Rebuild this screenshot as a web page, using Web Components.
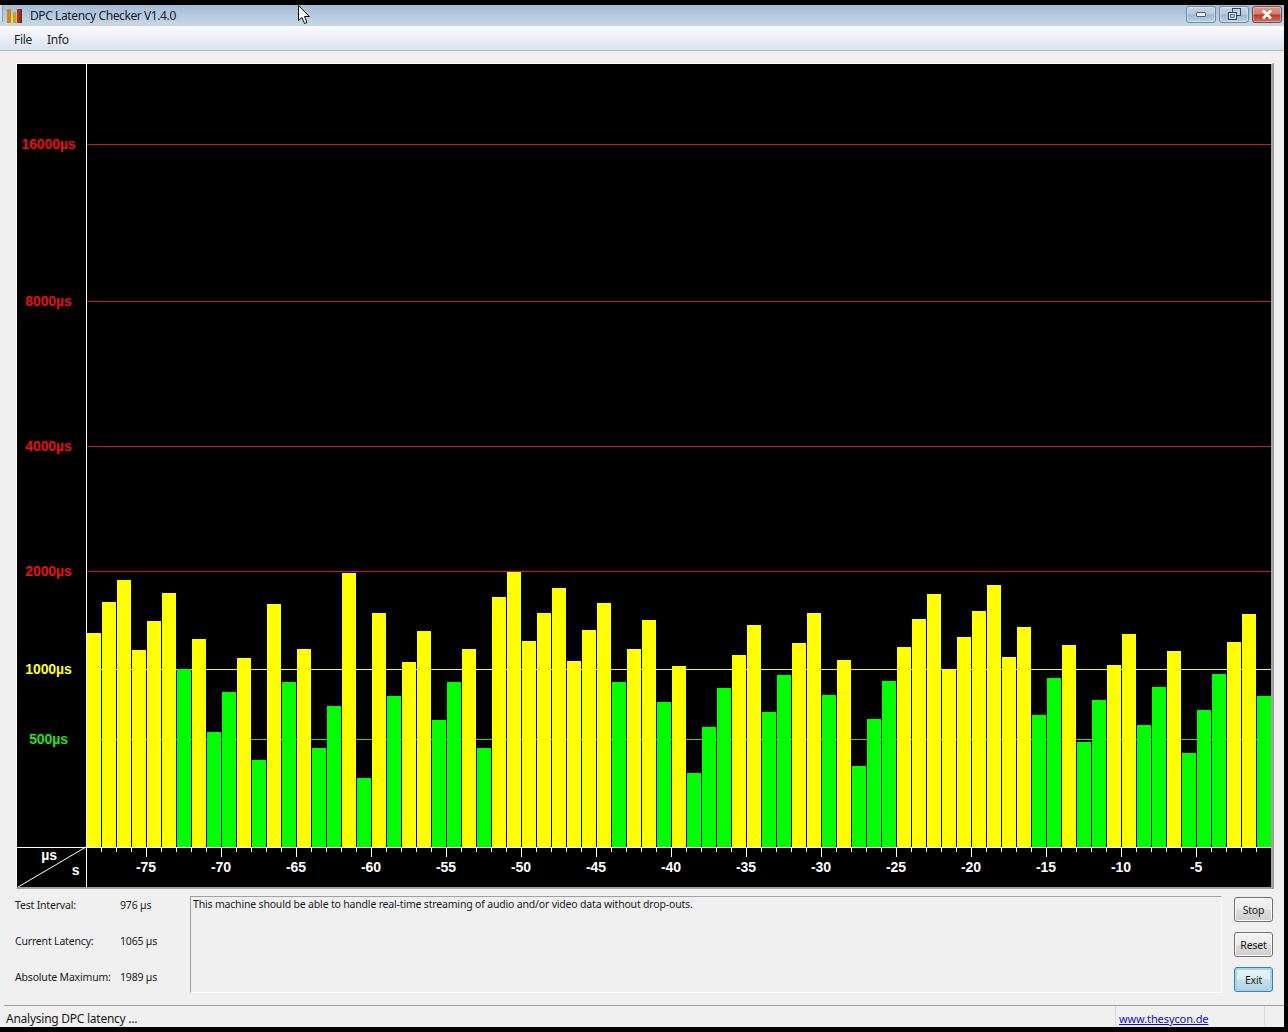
<!DOCTYPE html>
<html>
<head>
<meta charset="utf-8">
<title>DPC Latency Checker</title>
<style>
  html, body { margin: 0; background: #000; height: 100%; overflow: hidden; }
  body { font: 11px "Noto Sans", "Liberation Sans", sans-serif; color: #1a1a1a; }
</style>
</head>
<body>
<app-window>
  <title-bar>DPC Latency Checker V1.4.0</title-bar>
  <menu-bar></menu-bar>
  <latency-chart></latency-chart>
  <info-panel>This machine should be able to handle real-time streaming of audio and/or video data without drop-outs.</info-panel>
  <status-bar>Analysing DPC latency ...</status-bar>
</app-window>
<mouse-cursor></mouse-cursor>

<script>
class AppWindow extends HTMLElement {
  connectedCallback() {
    this.attachShadow({ mode: 'open' });
    this.shadowRoot.innerHTML = `
      <style>
        :host {
          display: flex;
          flex-direction: column;
          width: 1284px;
          height: 1022px;
          margin-top: 5px;
          background: #f0f0f0;
        }
      </style>
      <slot></slot>
    `;
  }
}
customElements.define('app-window', AppWindow);

class TitleBar extends HTMLElement {
  connectedCallback() {
    this.attachShadow({ mode: 'open' });
    this.shadowRoot.innerHTML = `
      <style>
        :host {
          display: flex;
          align-items: center;
          height: 21px;
          background: linear-gradient(#a3bcd6, #c9d8e7);
          color: #14202c;
          font: 12px "Noto Sans", "Liberation Sans", sans-serif;
        }
        svg { display: block; }
        .edge {
          align-self: stretch;
          width: 2px;
          margin-bottom: 4px;
          background: #d3dde8;
          border-right: 1px solid #8a9cb0;
        }
        .icon { margin-left: 4px; margin-right: 8px; }
        .title { flex: 1; letter-spacing: -0.4px; }
        .btns { display: flex; gap: 3px; margin-right: 2px; margin-bottom: 3px; }
        .btn {
          width: 30px;
          height: 17px;
          box-sizing: border-box;
          border: 1px solid #6f8aa6;
          border-radius: 3px;
          display: flex;
          align-items: center;
          justify-content: center;
          background: linear-gradient(#c5d6e6 0%, #b4c9de 48%, #9db7d1 52%, #bdd0e3 100%);
          box-shadow: inset 0 0 0 1px rgba(255,255,255,.35);
        }
        .close {
          border-color: #7a4a4a;
          background: linear-gradient(#dc9c90 0%, #d27a6c 48%, #b83a24 52%, #d0705c 100%);
        }
      </style>
      <span class="edge"></span>
      <svg class="icon" width="15" height="15" viewBox="0 0 15 15">
        <rect x="0" y="1" width="4" height="14" fill="#d9801c"/>
        <rect x="4" y="8" width="2" height="7" fill="#ecd070"/>
        <rect x="6" y="4" width="3" height="11" fill="#a8b030"/>
        <rect x="9" y="8" width="1" height="7" fill="#e8c050"/>
        <rect x="10" y="1" width="3" height="14" fill="#c02818"/>
        <rect x="13" y="1" width="2" height="14" fill="#6a3020"/>
      </svg>
      <span class="title"><slot></slot></span>
      <div class="btns">
        <div class="btn">
          <svg width="14" height="7" viewBox="0 0 14 7"><rect x="2.5" y="1.5" width="9" height="4" rx="0.5" fill="#eef3f8" stroke="#4d6278"/></svg>
        </div>
        <div class="btn">
          <svg width="13" height="12" viewBox="0 0 13 12">
            <rect x="4.5" y="0.5" width="8" height="7" fill="#c2d3e3" stroke="#33475c"/>
            <rect x="0.5" y="4.5" width="8" height="7" fill="#dbe6f0" stroke="#33475c"/>
            <rect x="2.5" y="6.5" width="4" height="3" fill="#a9bed2" stroke="#33475c" stroke-width="0.6"/>
          </svg>
        </div>
        <div class="btn close">
          <svg width="14" height="11" viewBox="0 0 14 11"><path d="M3 1.5 L11 9.5 M11 1.5 L3 9.5" fill="none" stroke="#fff" stroke-width="2.6"/></svg>
        </div>
      </div>
    `;
  }
}
customElements.define('title-bar', TitleBar);

class MenuBar extends HTMLElement {
  connectedCallback() {
    this.attachShadow({ mode: 'open' });
    this.shadowRoot.innerHTML = `
      <style>
        :host {
          display: flex;
          align-items: center;
          gap: 15px;
          padding-left: 14px;
          padding-top: 2px;
          box-sizing: border-box;
          height: 25px;
          background: linear-gradient(#fbfcfe, #dbe2ef);
          border-bottom: 1px solid #b4bcc8;
          color: #1a2230;
          font: 12px "Noto Sans", "Liberation Sans", sans-serif;
          letter-spacing: -0.3px;
        }
      </style>
      <span>File</span>
      <span>Info</span>
    `;
  }
}
customElements.define('menu-bar', MenuBar);

// bar tops read off the screenshot, left to right. g = below the 1000us line
const BARS = [
  [633,'y'],[602,'y'],[580,'y'],[650,'y'],[621,'y'],[593,'y'],[669,'g'],[639,'y'],[732,'g'],[692,'g'],
  [658,'y'],[760,'g'],[604,'y'],[682,'g'],[649,'y'],[748,'g'],[706,'g'],[573,'y'],[778,'g'],[613,'y'],
  [696,'g'],[662,'y'],[631,'y'],[720,'g'],[682,'g'],[649,'y'],[748,'g'],[597,'y'],[572,'y'],[641,'y'],
  [613,'y'],[588,'y'],[661,'y'],[630,'y'],[603,'y'],[682,'g'],[649,'y'],[620,'y'],[702,'g'],[666,'y'],
  [773,'g'],[727,'g'],[688,'g'],[655,'y'],[625,'y'],[712,'g'],[675,'g'],[643,'y'],[613,'y'],[695,'g'],
  [660,'y'],[766,'g'],[719,'g'],[681,'g'],[647,'y'],[619,'y'],[594,'y'],[669,'y'],[637,'y'],[611,'y'],
  [585,'y'],[657,'y'],[627,'y'],[715,'g'],[678,'g'],[645,'y'],[742,'g'],[700,'g'],[665,'y'],[634,'y'],
  [725,'g'],[687,'g'],[651,'y'],[753,'g'],[710,'g'],[674,'g'],[642,'y'],[614,'y'],[696,'g']
];

const GRID = [
  { y: 144, label: '16000µs', line: '#d01818', text: '#e81010' },
  { y: 301, label: '8000µs', line: '#d01818', text: '#e81010' },
  { y: 446, label: '4000µs', line: '#d01818', text: '#e81010' },
  { y: 571, label: '2000µs', line: '#d01818', text: '#e81010' },
  { y: 669, label: '1000µs', line: '#f0f060', text: '#ffff20' },
  { y: 739, label: '500µs', line: '#40d040', text: '#20e020' }
];

class LatencyChart extends HTMLElement {
  connectedCallback() {
    this.attachShadow({ mode: 'open' });
    let s = '';
    s += '<line x1="86.5" y1="64" x2="86.5" y2="888" stroke="#fff"/>';
    for (const g of GRID) {
      s += `<line x1="87" y1="${g.y + .5}" x2="1271" y2="${g.y + .5}" stroke="${g.line}"/>`;
      s += `<text x="48.5" y="${g.y + 5}" text-anchor="middle" fill="${g.text}">${g.label}</text>`;
    }
    BARS.forEach((b, i) => {
      const x = 87 + i * 15;
      s += `<rect x="${x}" y="${b[0]}" width="14" height="${847 - b[0]}" fill="${b[1] === 'y' ? '#ffff00' : '#00ff00'}"/>`;
    });
    s += '<line x1="17" y1="847.5" x2="1271" y2="847.5" stroke="#fff"/>';
    // ticks under the bars, every 5th one long with its label
    for (let k = 1; k * 15 + 86 < 1271; k++) {
      const x = 86 + k * 15;
      const long = k % 5 === 4;
      s += `<line x1="${x + .5}" y1="848" x2="${x + .5}" y2="${long ? 857 : 852}" stroke="#fff"/>`;
      if (long) {
        const sec = -75 + (k - 4) / 5 * 5;
        s += `<text x="${x}" y="872" text-anchor="middle" fill="#fff">${sec}</text>`;
      }
    }
    s += '<line x1="18" y1="887" x2="86" y2="847" stroke="#fff" shape-rendering="auto"/>';
    s += '<text x="49" y="860" text-anchor="middle" fill="#fff">µs</text>';
    s += '<text x="75.5" y="875" text-anchor="middle" fill="#fff">s</text>';
    this.shadowRoot.innerHTML = `
      <style>
        :host {
          display: block;
          margin: 12px 10px 0 16px;
          border-top: 1px solid #fff;
          border-left: 1px solid #fff;
          border-right: 3px solid #a0a0a0;
          border-bottom: 2px solid #a0a0a0;
          height: 823px;
        }
        svg { display: block; background: #000; shape-rendering: crispEdges; }
        text { font: bold 14px "Liberation Sans", Arial, sans-serif; letter-spacing: -0.1px; }
      </style>
      <svg width="1254" height="823" viewBox="17 64 1254 823">${s}</svg>
    `;
  }
}
customElements.define('latency-chart', LatencyChart);

class PushButton extends HTMLElement {
  connectedCallback() {
    this.attachShadow({ mode: 'open' });
    this.shadowRoot.innerHTML = `
      <style>
        :host {
          display: flex;
          align-items: center;
          justify-content: center;
          width: 39px;
          height: 25px;
          box-sizing: border-box;
          border: 1px solid #707070;
          border-radius: 3px;
          background: linear-gradient(#f4f4f4 0%, #ebebeb 48%, #dcdcdc 52%, #cfcfcf 100%);
          box-shadow: inset 0 0 0 1px #fbfbfb;
          color: #1a1a1a;
          font: 10.5px "Noto Sans", "Liberation Sans", sans-serif;
        }
        :host([active]) {
          border-color: #3c7fb1;
          background: linear-gradient(#eaf6fb 0%, #dcebf3 48%, #c8dde8 52%, #b8d0dd 100%);
          box-shadow: inset 0 0 0 2px #9ed8ee;
        }
      </style>
      <slot></slot>
    `;
  }
}
customElements.define('push-button', PushButton);

class InfoPanel extends HTMLElement {
  connectedCallback() {
    this.attachShadow({ mode: 'open' });
    this.shadowRoot.innerHTML = `
      <style>
        :host {
          display: flex;
          height: 116px;
          box-sizing: border-box;
          padding: 7px 11px 12px 15px;
          color: #1a1a1a;
          font: 10.5px "Noto Sans", "Liberation Sans", sans-serif;
          letter-spacing: -0.18px;
        }
        .stats {
          width: 175px;
          display: grid;
          grid-template-columns: 105px 1fr;
          grid-auto-rows: 36px;
          align-items: center;
          margin-top: -9px;
        }
        .msg {
          width: 1032px;
          box-sizing: border-box;
          border: 1px solid #fff;
          border-top-color: #a0a0a0;
          border-left-color: #a0a0a0;
          padding: 0 2px;
          line-height: 14px;
        }
        .btns {
          margin-left: 12px;
          padding-top: 1px;
          display: flex;
          flex-direction: column;
          gap: 10px;
        }
      </style>
      <div class="stats">
        <span>Test Interval:</span><span>976 µs</span>
        <span>Current Latency:</span><span>1065 µs</span>
        <span>Absolute Maximum:</span><span>1989 µs</span>
      </div>
      <div class="msg"><slot></slot></div>
      <div class="btns">
        <push-button>Stop</push-button>
        <push-button>Reset</push-button>
        <push-button active>Exit</push-button>
      </div>
    `;
  }
}
customElements.define('info-panel', InfoPanel);

class StatusBar extends HTMLElement {
  connectedCallback() {
    this.attachShadow({ mode: 'open' });
    this.shadowRoot.innerHTML = `
      <style>
        :host {
          display: flex;
          align-items: center;
          height: 22px;
          box-sizing: border-box;
          margin-left: 4px;
          border-top: 1px solid #a0a0a0;
          color: #1a1a1a;
          font: 12px "Noto Sans", "Liberation Sans", sans-serif;
          letter-spacing: -0.25px;
        }
        .msg { flex: 1; padding-left: 2px; padding-top: 4px; }
        .link {
          width: 150px;
          height: 100%;
          box-sizing: border-box;
          display: flex;
          align-items: center;
          padding-left: 3px;
          padding-top: 4px;
          border-left: 1px solid #dcdcdc;
          border-right: 1px solid #dcdcdc;
        }
        a { color: #0a0ad8; text-decoration: underline; font-size: 11px; letter-spacing: -0.1px; }
        .grip { width: 19px; }
      </style>
      <span class="msg"><slot></slot></span>
      <span class="link"><a href="#">www.thesycon.de</a></span>
      <span class="grip"></span>
    `;
  }
}
customElements.define('status-bar', StatusBar);

class MouseCursor extends HTMLElement {
  connectedCallback() {
    this.attachShadow({ mode: 'open' });
    this.shadowRoot.innerHTML = `
      <style>
        :host { position: absolute; left: 298px; top: 5px; width: 13px; height: 20px; }
        svg { display: block; }
      </style>
      <svg width="13" height="20" viewBox="0 0 13 20">
        <path d="M0.5 0.5 L0.5 15.5 L4 12.5 L6.5 18.5 L9 17.5 L6.5 11.5 L11.5 11.5 Z" fill="#fff" stroke="#111" stroke-width="1"/>
      </svg>
    `;
  }
}
customElements.define('mouse-cursor', MouseCursor);
</script>
</body>
</html>
